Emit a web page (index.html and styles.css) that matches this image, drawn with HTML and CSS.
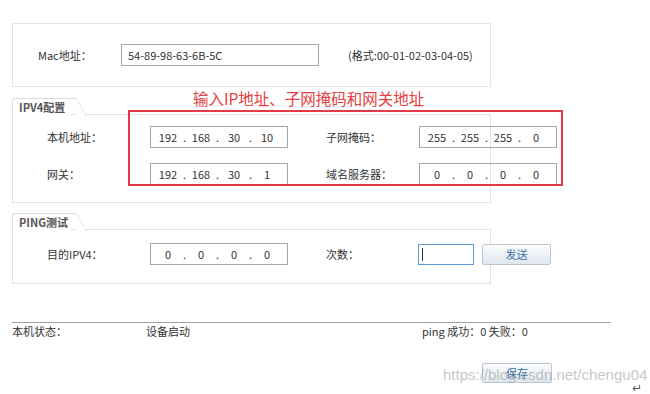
FILE: index.html
```html
<!DOCTYPE html>
<html lang="zh-CN">
<head>
    <meta charset="UTF-8">
    <meta name="viewport" content="width=device-width, initial-scale=1.0">
    <title>网络配置</title>
    <link rel="stylesheet" href="styles.css">
</head>
<body>
    <div class="page">
        <div class="panel mac-panel">
            <span class="mac-label">Mac地址：</span>
            <div class="text-input mac-input">54-89-98-63-6B-5C</div>
            <span class="format">(格式:00-01-02-03-04-05)</span>
        </div>

        <div class="group">
            <div class="tab">IPV4配置</div>
            <div class="group-body ipv4-grid">
                <span>本机地址：</span>
                <div class="ip-input"><span>192</span><i>.</i><span>168</span><i>.</i><span>30</span><i>.</i><span>10</span></div>
                <span></span>
                <span>子网掩码：</span>
                <div class="ip-input"><span>255</span><i>.</i><span>255</span><i>.</i><span>255</span><i>.</i><span>0</span></div>

                <span>网关：</span>
                <div class="ip-input"><span>192</span><i>.</i><span>168</span><i>.</i><span>30</span><i>.</i><span>1</span></div>
                <span></span>
                <span>域名服务器：</span>
                <div class="ip-input"><span>0</span><i>.</i><span>0</span><i>.</i><span>0</span><i>.</i><span>0</span></div>
            </div>
        </div>

        <div class="group ping-group">
            <div class="tab">PING测试</div>
            <div class="group-body ping-grid">
                <span>目的IPV4：</span>
                <div class="ip-input"><span>0</span><i>.</i><span>0</span><i>.</i><span>0</span><i>.</i><span>0</span></div>
                <span></span>
                <span>次数：</span>
                <div class="count-input"><b class="caret"></b></div>
                <span></span>
                <button class="btn">发送</button>
            </div>
        </div>

        <div class="status">
            <span>本机状态：</span>
            <span>设备启动</span>
            <span>ping 成功：0 失败：0</span>
        </div>

        <button class="btn save-btn">保存</button>

        <div class="note-text">输入IP地址、子网掩码和网关地址</div>
        <div class="note-box"></div>
        <div class="watermark">https://blog.csdn.net/chengu04</div>
        <div class="return-mark">↵</div>
    </div>
</body>
</html>
```

FILE: styles.css
```css
body {
    margin: 0;
    background-color: white;
    font-family: "Noto Sans CJK SC", "Liberation Sans", sans-serif;
    font-size: 11px;
    color: #333;
}
.page {
    position: relative;
    width: 650px;
    height: 394px;
    padding: 23px 0 0 12px;
    box-sizing: border-box;
    overflow: hidden;
}
.panel,
.group-body {
    width: 479px;
    box-sizing: border-box;
    border: 1px solid #e2e2e2;
}
.mac-panel {
    height: 64px;
    display: flex;
    align-items: center;
    padding-left: 25px;
}
.mac-label {
    width: 83px;
}
.text-input {
    width: 198px;
    height: 22px;
    box-sizing: border-box;
    border: 1px solid #a6a6a6;
    padding-left: 6px;
    display: flex;
    align-items: center;
}
.format {
    margin-left: 29px;
}
.group {
    margin-top: 11px;
}
.ping-group {
    margin-top: 10px;
}
.tab {
    position: relative;
    z-index: 1;
    width: 52px;
    height: 16px;
    line-height: 16px;
    padding-left: 6px;
    margin-bottom: -1px;
    border-top: 1px solid #dcdcdc;
    border-left: 1px solid #dcdcdc;
    border-top-left-radius: 3px;
    background-color: white;
    font-weight: bold;
    color: #555;
    font-size: 11px;
}
.tab::after {
    content: "";
    position: absolute;
    top: -1px;
    right: -6px;
    width: 8px;
    height: 17px;
    background-color: white;
    border-top: 1px solid #dcdcdc;
    border-right: 1px solid #dcdcdc;
    border-top-right-radius: 2px;
    transform: skewX(28deg);
    transform-origin: top left;
}
.group-body {
    display: grid;
    align-items: center;
    padding-left: 34px;
}
.ipv4-grid {
    grid-template-columns: 103px 138px 38px 93px 138px;
    row-gap: 15px;
    padding-top: 11px;
    padding-bottom: 17px;
}
.ping-grid {
    grid-template-columns: 103px 138px 38px 92px 56px 8px 69px;
    padding-top: 13px;
    padding-bottom: 18px;
}
.ip-input {
    height: 22px;
    box-sizing: border-box;
    border: 1px solid #a6a6a6;
    padding-left: 4px;
    display: flex;
    align-items: center;
}
.ip-input span {
    width: 26px;
    text-align: center;
}
.ip-input i {
    width: 7px;
    font-style: normal;
    text-align: center;
}
.count-input {
    height: 21px;
    box-sizing: border-box;
    border: 1px solid #5c9ad6;
    display: flex;
    align-items: center;
    padding-left: 3px;
}
.caret {
    width: 1px;
    height: 13px;
    background-color: #333;
}
.btn {
    height: 21px;
    padding: 0;
    border: 1px solid #bcc6d0;
    border-radius: 2px;
    background: linear-gradient(#fbfcfd, #dfe7ef);
    color: #3b6fa6;
    font-family: "Noto Sans CJK SC", sans-serif;
    font-size: 11px;
}
.status {
    width: 599px;
    margin-top: 38px;
    border-top: 1px solid #a0a0a0;
    display: grid;
    grid-template-columns: 134px 276px auto;
    line-height: 15px;
    padding-top: 1px;
}
.save-btn {
    display: block;
    width: 70px;
    height: 20px;
    margin: 24px 0 0 470px;
}
.note-text {
    position: absolute;
    left: 193px;
    top: 87px;
    font-size: 15.5px;
    color: #e4403e;
}
.note-box {
    position: absolute;
    left: 128px;
    top: 110px;
    width: 435px;
    height: 76px;
    box-sizing: border-box;
    border: 2px solid #e03a44;
}
.watermark {
    position: absolute;
    left: 443px;
    top: 366px;
    font-family: "Liberation Sans", sans-serif;
    font-size: 15px;
    line-height: 17px;
    color: rgba(150, 150, 150, 0.55);
}
.return-mark {
    position: absolute;
    left: 632px;
    top: 383px;
    font-family: "DejaVu Sans", sans-serif;
    font-size: 12px;
    line-height: 11px;
    color: #555;
}
```
